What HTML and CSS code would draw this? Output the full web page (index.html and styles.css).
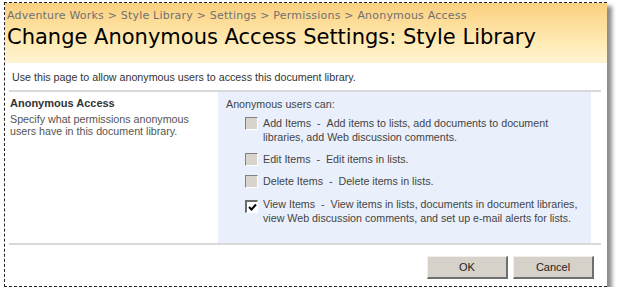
FILE: index.html
```html
<!DOCTYPE html>
<html lang="en">

<head>
    <meta charset="UTF-8">
    <title>Change Anonymous Access Settings</title>
    <link rel="stylesheet" href="styles.css">
</head>

<body>

    <main class="page">
        <header class="titel-omraade">
            <div class="brodkrumme">Adventure Works &gt; Style Library &gt; Settings &gt; Permissions &gt; Anonymous Access</div>
            <h1>Change Anonymous Access Settings: Style Library</h1>
        </header>

        <p class="intro">Use this page to allow anonymous users to access this document library.</p>

        <section class="sektion">
            <div class="sektion-info">
                <h3>Anonymous Access</h3>
                <p>Specify what permissions anonymous users have in this document library.</p>
            </div>
            <div class="sektion-felt">
                <div class="felt-titel">Anonymous users can:</div>
                <label class="valg">
                    <span class="boks"></span>
                    <span class="valg-tekst">Add Items &nbsp;- &nbsp;Add items to lists, add documents to document libraries, add Web discussion comments.</span>
                </label>
                <label class="valg">
                    <span class="boks"></span>
                    <span class="valg-tekst">Edit Items &nbsp;- &nbsp;Edit items in lists.</span>
                </label>
                <label class="valg">
                    <span class="boks"></span>
                    <span class="valg-tekst">Delete Items &nbsp;- &nbsp;Delete items in lists.</span>
                </label>
                <label class="valg">
                    <span class="boks valgt">
                        <svg width="9" height="9" viewBox="0 0 9 9"><path d="M1 4 L3.5 6.5 L8 1.5" fill="none" stroke="#000" stroke-width="2"/></svg>
                    </span>
                    <span class="valg-tekst">View Items &nbsp;- &nbsp;View items in lists, documents in document libraries, view Web discussion comments, and set up e-mail alerts for lists.</span>
                </label>
            </div>
        </section>

        <div class="knapper">
            <button class="knap">OK</button>
            <button class="knap">Cancel</button>
        </div>
    </main>

</body>

</html>
```

FILE: styles.css
```css
* {
    margin: 0;
    padding: 0;
    box-sizing: border-box;
}

body {
    background-color: #fff;
    font-family: 'Liberation Sans', Arial, sans-serif;
}

.page {
    margin: 2px 0 0 4px;
    width: 603px;
    height: 285px;
    background: #fff;
    border-left: 1px dashed #222;
    border-top: 1px dashed #222;
    border-bottom: 1px dashed #222;
    box-shadow: 5px 4px 4px rgba(0, 0, 0, 0.45);
}

.titel-omraade {
    height: 60px;
    padding: 6px 0 0 2px;
    background: linear-gradient(#fbd07e, #ffecb8 70%, #fff3d2);
}

.brodkrumme {
    font-family: 'DejaVu Sans', Verdana, sans-serif;
    font-size: 11px;
    letter-spacing: 0.2px;
    color: #707070;
    line-height: 14px;
}

h1 {
    font-family: 'DejaVu Sans', Verdana, sans-serif;
    font-weight: normal;
    font-size: 21px;
    line-height: 28px;
    color: #000;
}

.intro {
    font-size: 10.7px;
    color: #333;
    padding: 8px 0 0 3px;
    height: 29px;
    border-bottom: 2px solid #d9d9d9;
    margin-right: 6px;
    margin-left: 4px;
}

.sektion {
    display: grid;
    grid-template-columns: 209px 373px;
    margin-left: 4px;
    border-bottom: 2px solid #d9d9d9;
    margin-right: 6px;
}

.sektion-info {
    padding: 5px 0 0 1px;
    font-size: 10.7px;
}

.sektion-info h3 {
    font-size: 11px;
    color: #333;
    margin-bottom: 4px;
}

.sektion-info p {
    color: #555;
    line-height: 12px;
    padding-right: 20px;
}

.sektion-felt {
    background-color: #e9f0fb;
    padding: 6px 8px 12px 8px;
    font-size: 10.7px;
    color: #444;
    height: 151px;
}

.felt-titel {
    margin-bottom: 6px;
}

.valg {
    display: flex;
    gap: 5px;
    padding-left: 19px;
    line-height: 14px;
    margin-bottom: 8px;
}

.valg:nth-child(4) {
    margin-bottom: 9px;
}

.valg-tekst {
    width: 330px;
}

.boks {
    flex: none;
    width: 13px;
    height: 13px;
    margin-top: 1px;
    background: #d8d4cc;
    border-top: 1px solid #808080;
    border-left: 1px solid #808080;
    border-right: 1px solid #fff;
    border-bottom: 1px solid #fff;
}

.boks.valgt {
    margin-top: 3px;
    background: #fff;
    border-top: 2px solid #6b6b6b;
    border-left: 2px solid #6b6b6b;
    display: flex;
    align-items: center;
    justify-content: center;
}

.knapper {
    display: flex;
    justify-content: flex-end;
    gap: 5px;
    padding: 11px 13px 0 0;
}

.knap {
    width: 81px;
    height: 23px;
    font-family: 'Liberation Sans', Arial, sans-serif;
    font-size: 11px;
    color: #222;
    background: #d6d2ca;
    border-top: 1px solid #f2f0ec;
    border-left: 1px solid #f2f0ec;
    border-right: 2px solid #6e6e6e;
    border-bottom: 2px solid #6e6e6e;
}
```
